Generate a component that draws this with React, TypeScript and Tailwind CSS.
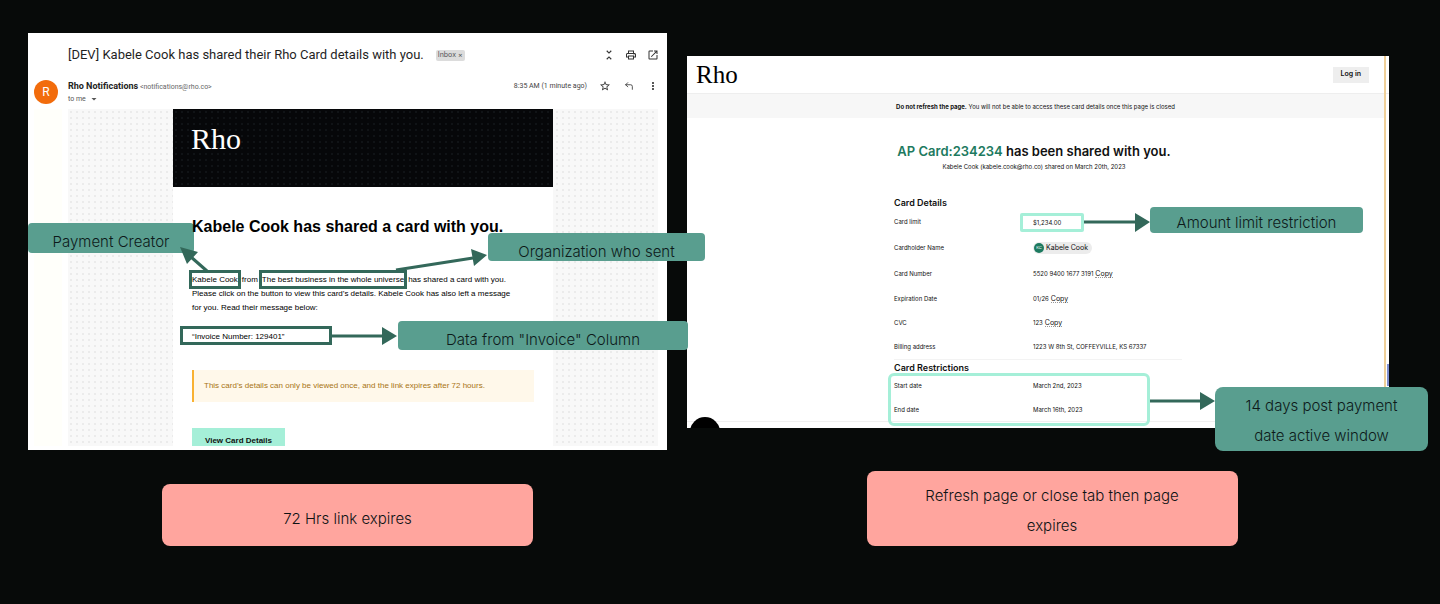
import clsx from "clsx";
import { CornerUpLeft } from "lucide-react";
import { ReactNode } from "react";
import { MdArrowDropDown, MdMoreVert, MdOpenInNew, MdOutlinePrint, MdStarBorder, MdUnfoldLess } from "react-icons/md";

type CalloutProps = {
  className: string;
  children: ReactNode;
};

const Callout = ({ className, children }: CalloutProps) => (
  <div className={clsx("absolute flex justify-center bg-[#599e8f] text-center text-[15px] font-light text-[#0d1a1a]", className)}>{children}</div>
);

const Note = ({ className, children }: CalloutProps) => (
  <div
    className={clsx(
      "flex max-w-[371px] items-center justify-center rounded-lg bg-[#ffa59e] text-center text-[15px] leading-[30px] font-light text-[#0d1214]",
      className
    )}
  >
    {children}
  </div>
);

type IconButtonProps = {
  label: string;
  children: ReactNode;
};

const IconButton = ({ label, children }: IconButtonProps) => (
  <button type="button" aria-label={label} className="flex size-3 items-center justify-center text-[#333]">
    {children}
  </button>
);

const MailHeader = () => (
  <header className="pr-2">
    <div className="flex h-11 items-center pl-10">
      <h1 className="font-[Roboto,sans-serif] text-[13px] text-[#1f1f1f]">[DEV] Kabele Cook has shared their Rho Card details with you.</h1>
      <span className="ml-3 flex h-[11px] items-center rounded-xs bg-[#dcdcdc] px-[2px] text-[7px] text-[#555]">Inbox ×</span>
      <div className="ml-auto flex gap-[10px]">
        <IconButton label="Collapse all">
          <MdUnfoldLess size={14} className="shrink-0" />
        </IconButton>
        <IconButton label="Print all">
          <MdOutlinePrint size={12} />
        </IconButton>
        <IconButton label="Open in new window">
          <MdOpenInNew size={12} />
        </IconButton>
      </div>
    </div>
    <div className="flex h-8 items-start pl-[6px] font-[Roboto,sans-serif]">
      <div className="mt-[3px] flex size-6 items-center justify-center rounded-full bg-[#f26c0c] text-xs text-white">R</div>
      <div className="ml-[10px] pt-[3px] text-[7px] leading-3">
        <p className="text-[#666]">
          <strong className="text-[9px] font-bold text-[#222]">Rho Notifications</strong> &lt;notifications@rho.co&gt;
        </p>
        <p className="flex items-center text-[#555]">
          to me <MdArrowDropDown size={12} className="ml-[2px]" />
        </p>
      </div>
      <div className="ml-auto flex items-center gap-3 pt-[3px]">
        <span className="text-[7px] text-[#444]">8:35 AM (1 minute ago)</span>
        <IconButton label="Star">
          <MdStarBorder size={12} />
        </IconButton>
        <IconButton label="Reply">
          <CornerUpLeft size={10} />
        </IconButton>
        <IconButton label="More">
          <MdMoreVert size={12} />
        </IconButton>
      </div>
    </div>
  </header>
);

const MailBody = () => (
  <article className="relative mx-auto w-[380px] bg-white font-['Liberation_Sans',sans-serif]">
    <div className="h-[78px] bg-[#060709] bg-[radial-gradient(#101316_1px,transparent_1px)] bg-size-[6px_6px] px-[18px] pt-3">
      <span className="font-['Liberation_Serif',serif] text-[30px] leading-9 text-white">Rho</span>
    </div>
    <Callout className="top-[114px] -left-[145px] h-[30px] w-[166px] rounded-sm font-[Inter,sans-serif] leading-[38px]">Payment Creator</Callout>
    <div className="px-[19px] pt-7">
      <h2 className="relative text-[16px] leading-6 font-bold whitespace-nowrap text-black">Kabele Cook has shared a card with you.</h2>
      <p className="pt-[34px] text-[8px] leading-[14px] whitespace-nowrap text-black">
        <span className="py-[2px] outline-[3px] outline-[#33685a]">Kabele Cook</span>
        <span className="px-1">from</span>
        <span className="py-[2px] outline-[3px] outline-[#33685a]">The best business in the whole universe</span>
        <span className="pl-1">has shared a card with you.</span>
        <br />
        Please click on the button to view this card’s details. Kabele Cook has also left a message
        <br />
        for you. Read their message below:
      </p>
      <p className="mt-[11px] -ml-3 h-[19px] w-[152px] border-[3px] border-[#33685a] pl-[9px] text-[8px] leading-[15px] text-black">
        “Invoice Number: 129401”
      </p>
      <p className="mt-[25px] flex h-8 items-center border-l-2 border-[#f9b233] bg-[#fff8ea] pl-[10px] text-[8px] text-[#a87414]">
        This card’s details can only be viewed once, and the link expires after 72 hours.
      </p>
      <button type="button" className="mt-[26px] block bg-[#a5efd8] px-[13px] pt-[7px] text-[8px] leading-[11px] font-bold text-[#111]">
        View Card Details
      </button>
    </div>
    <svg className="pointer-events-none absolute inset-0 size-full overflow-visible" fill="#33685a" stroke="none" aria-hidden>
      <path d="M34 162 18 148M223 161 300 149M159 227H211" stroke="#33685a" strokeWidth="3" />
      <path d="M7 138 25 143 14 155ZM314 146 298 140 301 157ZM224 227 209 218V236Z" />
    </svg>
    <Callout className="top-[124px] left-[315px] h-7 w-[217px] rounded-sm font-[Inter,sans-serif] leading-[38px]">Organization who sent</Callout>
    <Callout className="top-[212px] left-[225px] h-[29px] w-[290px] rounded-sm font-[Inter,sans-serif] leading-[38px]">
      Data from "Invoice" Column
    </Callout>
  </article>
);

const CopyButton = () => (
  <button type="button" className="ml-[2px] border-b border-dotted border-[#999] text-[7px] leading-[7px]">
    Copy
  </button>
);

const cardDetails: { label: string; height: string; value: ReactNode }[] = [
  {
    label: "Card limit",
    height: "h-[26px]",
    value: <span className="-ml-[13px] block h-[19px] w-16 rounded-xs border-[3px] border-[#a5efd8] pl-[10px] leading-[13px]">$1,234.00</span>,
  },
  {
    label: "Cardholder Name",
    height: "h-[26px]",
    value: (
      <span className="inline-flex h-3 items-center gap-[2px] rounded-full bg-[#ececec] pr-1 pl-px text-[7px]">
        <span className="flex size-[10px] items-center justify-center rounded-full bg-[#1d7a60] text-[4px] text-white">KC</span>
        Kabele Cook
      </span>
    ),
  },
  {
    label: "Card Number",
    height: "h-[26px]",
    value: (
      <>
        5520 9400 1677 3191
        <CopyButton />
      </>
    ),
  },
  {
    label: "Expiration Date",
    height: "h-6",
    value: (
      <>
        01/26
        <CopyButton />
      </>
    ),
  },
  {
    label: "CVC",
    height: "h-6",
    value: (
      <>
        123
        <CopyButton />
      </>
    ),
  },
  { label: "Billing address", height: "h-6", value: "1223 W 8th St, COFFEYVILLE, KS 67337" },
];

const restrictions = [
  { label: "Start date", height: "h-6", value: "March 2nd, 2023" },
  { label: "End date", height: "h-[23px]", value: "March 16th, 2023" },
];

const DetailsTable = ({ title, rows }: { title: string; rows: typeof cardDetails }) => (
  <table className="w-full text-left text-[6px] leading-[8px]">
    <caption className="h-3 text-left text-[9px] leading-3 font-semibold">{title}</caption>
    <tbody>
      {rows.map(({ label, height, value }) => (
        <tr key={label} className={height}>
          <th scope="row" className="w-[139px] font-normal">
            {label}
          </th>
          <td className="whitespace-nowrap">{value}</td>
        </tr>
      ))}
    </tbody>
  </table>
);

const SharedCardPage = () => (
  <section className="relative bg-white font-[Inter,sans-serif] text-[#111]">
    <div className="absolute inset-y-0 right-[3px] w-[2px] bg-[#efcf98]" />
    <div className="absolute right-0 bottom-[42px] h-[22px] w-[2px] bg-[#7f8fd0]" />
    <header className="flex h-[38px] items-center justify-between border-b border-[#eee] pr-5 pl-[9px]">
      <span className="font-['Liberation_Serif',serif] text-[25px] leading-8 text-black">Rho</span>
      <button type="button" className="h-4 bg-[#eee] px-2 text-[7px] font-semibold">
        Log in
      </button>
    </header>
    <p className="mr-[5px] flex h-6 items-center justify-center bg-[#f7f7f7] text-[6px]">
      <span>
        <strong>Do not refresh the page.</strong> You will not be able to access these card details once this page is closed
      </span>
    </p>
    <h2 className="pt-6 pr-2 text-center text-[13px] leading-[18px] font-semibold">
      <span className="text-[#1d7a60]">AP Card:234234</span> has been shared with you.
    </h2>
    <p className="pt-[3px] pr-2 text-center text-[6px] leading-[8px]">Kabele Cook (kabele.cook@rho.co) shared on March 20th, 2023</p>
    <div className="relative mx-auto mt-[26px] w-72">
      <DetailsTable title="Card Details" rows={cardDetails} />
      <hr className="mb-[2px] border-[#f3f3f3]" />
      <DetailsTable title="Card Restrictions" rows={restrictions} />
      <div className="absolute -bottom-[5px] -left-[6px] h-[53px] w-[262px] rounded-md border-[3px] border-[#a5efd8]" />
      <svg className="pointer-events-none absolute inset-0 size-full overflow-visible" fill="#33685a" stroke="none" aria-hidden>
        <path d="M190 25H243M256 204H308" stroke="#33685a" strokeWidth="3" />
        <path d="M256 25 241 16V35ZM321 204 306 195V213Z" />
      </svg>
      <Callout className="top-[10px] left-64 h-[26px] w-[213px] rounded-sm leading-[32px] whitespace-nowrap">Amount limit restriction</Callout>
      <Callout className="top-[190px] left-[321px] h-16 w-[213px] rounded-lg px-4 pt-1 leading-[30px]">14 days post payment date active window</Callout>
    </div>
    <div className="h-[7px] border-t border-[#f0f0f0]" />
    <div className="absolute bottom-0 left-[3px] h-[11px] w-[30px] overflow-hidden">
      <div className="size-[30px] rounded-full bg-black" />
    </div>
  </section>
);

const App = () => (
  <main className="grid min-h-screen grid-cols-[639fr_702fr] items-start gap-5 bg-[#070a09] pr-[51px] pl-7 font-[Inter,sans-serif]">
    <div className="relative z-10 pt-[33px]">
      <section className="bg-white pb-1">
        <MailHeader />
        <div className="flex pr-[9px]">
          <div className="mr-[6px] ml-[6px] w-7 shrink-0 bg-[#fffffa]" />
          <div className="flex-1 bg-[#f8f8f8] bg-[radial-gradient(#ebebeb_1px,transparent_1px)] bg-size-[6px_6px]">
            <MailBody />
          </div>
        </div>
      </section>
      <Note className="mx-auto mt-[34px] h-[62px] pt-2">72 Hrs link expires</Note>
    </div>
    <div className="pt-14">
      <SharedCardPage />
      <div className="pt-[43px] pl-7">
        <Note className="mx-auto h-[75px] px-14 pt-1">Refresh page or close tab then page expires</Note>
      </div>
    </div>
  </main>
);

export default App;
